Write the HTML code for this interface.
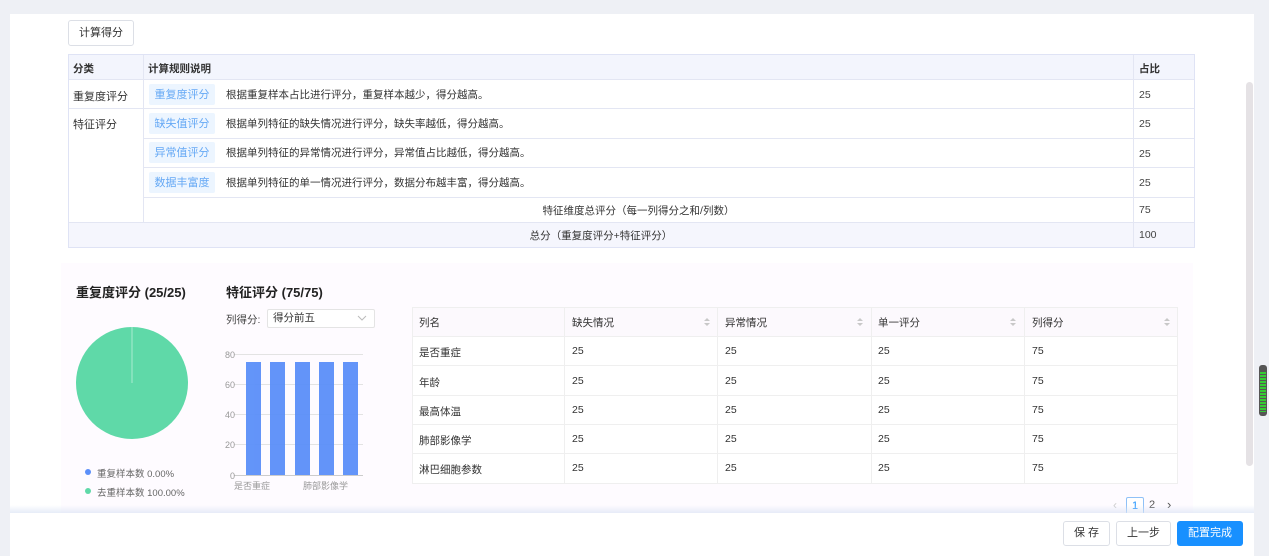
<!DOCTYPE html>
<html><head><meta charset="utf-8"><style>
*{box-sizing:border-box;margin:0;padding:0}
body{width:1269px;height:556px;background:#eef0f5;font-family:"Liberation Sans","Noto Sans CJK SC",sans-serif;font-size:11px;color:#333;position:relative;overflow:hidden}
.a{position:absolute}
.panel{left:10px;top:14px;width:1244px;height:542px;background:#fff}
.btn{border:1px solid #dcdfe6;border-radius:3px;background:#fff;text-align:center;color:#333;font-size:11px}
.tag{position:absolute;left:149px;width:66px;height:21px;background:#ecf5ff;color:#66a9f5;font-size:11px;line-height:23px;text-align:center;border-radius:2px}
.desc{position:absolute;left:226px;font-size:10.5px;color:#333}
.num{position:absolute;left:1139px;font-size:10.5px;color:#444}
.hl{position:absolute;height:1px;background:#e3e6f3}
.rt{position:absolute;font-size:10.5px;color:#333}
.rhl{position:absolute;left:412px;width:766px;height:1px;background:#efefef}
.rvl{position:absolute;top:307px;height:177px;width:1px;background:#efefef}
.sort{position:absolute;width:6px;height:10px}
</style></head><body>
<div class="a panel"></div>
<div class="a btn" style="left:68px;top:20px;width:66px;height:26px;line-height:24px">计算得分</div>

<div class="a" style="left:68px;top:54px;width:1127px;height:194px;border:1px solid #dfe3f5"></div>
<div class="a" style="left:69px;top:55px;width:1125px;height:24px;background:#f3f5fd"></div>
<div class="a" style="left:69px;top:222px;width:1125px;height:25px;background:#f5f6fd"></div>
<div class="hl" style="left:69px;top:79px;width:1125px"></div>
<div class="hl" style="left:69px;top:108px;width:1125px"></div>
<div class="hl" style="left:144px;top:138px;width:1050px"></div>
<div class="hl" style="left:144px;top:167px;width:1050px"></div>
<div class="hl" style="left:144px;top:197px;width:1050px"></div>
<div class="hl" style="left:69px;top:222px;width:1125px"></div>
<div class="a" style="left:143px;top:55px;width:1px;height:167px;background:#e3e6f3"></div>
<div class="a" style="left:1133px;top:55px;width:1px;height:192px;background:#e3e6f3"></div>
<div class="a" style="left:73px;top:61px;font-weight:bold;font-size:10.5px">分类</div>
<div class="a" style="left:148px;top:61px;font-weight:bold;font-size:10.5px">计算规则说明</div>
<div class="a" style="left:1139px;top:61px;font-weight:bold;font-size:10.5px">占比</div>
<div class="a" style="left:73px;top:88px;font-size:11px">重复度评分</div>
<div class="a" style="left:73px;top:116px;font-size:11px">特征评分</div>
<div class="tag" style="top:84px">重复度评分</div>
<div class="tag" style="top:113px">缺失值评分</div>
<div class="tag" style="top:142px">异常值评分</div>
<div class="tag" style="top:172px">数据丰富度</div>
<div class="desc" style="top:87px">根据重复样本占比进行评分，重复样本越少，得分越高。</div>
<div class="desc" style="top:116px">根据单列特征的缺失情况进行评分，缺失率越低，得分越高。</div>
<div class="desc" style="top:145px">根据单列特征的异常情况进行评分，异常值占比越低，得分越高。</div>
<div class="desc" style="top:175px">根据单列特征的单一情况进行评分，数据分布越丰富，得分越高。</div>
<div class="num" style="top:89px">25</div>
<div class="num" style="top:118px">25</div>
<div class="num" style="top:148px">25</div>
<div class="num" style="top:177px">25</div>
<div class="num" style="top:204px">75</div>
<div class="num" style="top:229px">100</div>
<div class="a" style="left:144px;width:989px;top:203px;text-align:center;font-size:10.5px">特征维度总评分（每一列得分之和/列数）</div>
<div class="a" style="left:69px;width:1064px;top:228px;text-align:center;font-size:10.5px">总分（重复度评分+特征评分）</div>

<div class="a" style="left:61px;top:263px;width:1132px;height:250px;background:#fefbff"></div>
<div class="a" style="left:76px;top:282px;font-size:13px;font-weight:bold;color:#222">重复度评分 (25/25)</div>
<div class="a" style="left:226px;top:282px;font-size:13px;font-weight:bold;color:#222">特征评分 (75/75)</div>
<svg class="a" style="left:70px;top:320px" width="124" height="128"><circle cx="62" cy="63" r="56" fill="#5fd9a8"/><line x1="62" y1="7" x2="62" y2="63" stroke="#a8ead0" stroke-width="1"/></svg>
<div class="a" style="left:85px;top:469px;width:6px;height:6px;border-radius:50%;background:#5b8ff9"></div>
<div class="a" style="left:97px;top:466px;font-size:9.5px;color:#666">重复样本数 0.00%</div>
<div class="a" style="left:85px;top:488px;width:6px;height:6px;border-radius:50%;background:#5fd9a8"></div>
<div class="a" style="left:97px;top:485px;font-size:9.5px;color:#666">去重样本数 100.00%</div>

<div class="a" style="left:226px;top:312px;font-size:10.5px;color:#444">列得分:</div>
<div class="a" style="left:267px;top:309px;width:108px;height:19px;border:1px solid #e4e4e4;background:#fff;border-radius:2px;font-size:10.5px;line-height:17px;padding-left:5px">得分前五</div>
<svg class="a" style="left:357px;top:314px" width="10" height="8"><path d="M1 2 L5 6 L9 2" fill="none" stroke="#bbb" stroke-width="1"/></svg>
<svg class="a" style="left:220px;top:345px" width="150" height="150" font-family="Liberation Sans" font-size="9" fill="#999">
<g stroke="#e3e3e3"><line x1="14" y1="9.5" x2="143" y2="9.5"/><line x1="14" y1="39.5" x2="143" y2="39.5"/><line x1="14" y1="69.5" x2="143" y2="69.5"/><line x1="14" y1="99.5" x2="143" y2="99.5"/></g>
<line x1="14" y1="130.5" x2="143" y2="130.5" stroke="#ccc"/>
<text x="15" y="13" text-anchor="end">80</text><text x="15" y="43" text-anchor="end">60</text><text x="15" y="73" text-anchor="end">40</text><text x="15" y="103" text-anchor="end">20</text><text x="15" y="134" text-anchor="end">0</text>
<g fill="#5b8ff9" opacity=".95"><rect x="26" y="17" width="15" height="113"/><rect x="50" y="17" width="15" height="113"/><rect x="75" y="17" width="15" height="113"/><rect x="99" y="17" width="15" height="113"/><rect x="123" y="17" width="15" height="113"/></g>
<text x="14" y="144">是否重症</text><text x="83" y="144">肺部影像学</text>
</svg>

<div class="a" style="left:412px;top:307px;width:766px;height:177px;border:1px solid #efefef;background:#fff"></div>
<div class="a" style="left:413px;top:308px;width:764px;height:28px;background:#fcf9fd"></div>
<div class="rhl" style="top:336px"></div><div class="rhl" style="top:365px"></div><div class="rhl" style="top:395px"></div><div class="rhl" style="top:424px"></div><div class="rhl" style="top:453px"></div>
<div class="rvl" style="left:564px"></div><div class="rvl" style="left:717px"></div><div class="rvl" style="left:871px"></div><div class="rvl" style="left:1024px"></div>
<div class="rt" style="left:419px;top:315px">列名</div>
<div class="rt" style="left:572px;top:315px">缺失情况</div>
<div class="rt" style="left:725px;top:315px">异常情况</div>
<div class="rt" style="left:878px;top:315px">单一评分</div>
<div class="rt" style="left:1032px;top:315px">列得分</div>
<svg class="sort" style="left:704px;top:317px"><path d="M0 4L3 1L6 4Z M0 6L3 9L6 6Z" fill="#c8c8c8"/></svg>
<svg class="sort" style="left:857px;top:317px"><path d="M0 4L3 1L6 4Z M0 6L3 9L6 6Z" fill="#c8c8c8"/></svg>
<svg class="sort" style="left:1010px;top:317px"><path d="M0 4L3 1L6 4Z M0 6L3 9L6 6Z" fill="#c8c8c8"/></svg>
<svg class="sort" style="left:1164px;top:317px"><path d="M0 4L3 1L6 4Z M0 6L3 9L6 6Z" fill="#c8c8c8"/></svg>
<div class="rt" style="left:419px;top:345px">是否重症</div><div class="rt" style="left:572px;top:345px">25</div><div class="rt" style="left:725px;top:345px">25</div><div class="rt" style="left:878px;top:345px">25</div><div class="rt" style="left:1032px;top:345px">75</div>
<div class="rt" style="left:419px;top:375px">年龄</div><div class="rt" style="left:572px;top:375px">25</div><div class="rt" style="left:725px;top:375px">25</div><div class="rt" style="left:878px;top:375px">25</div><div class="rt" style="left:1032px;top:375px">75</div>
<div class="rt" style="left:419px;top:404px">最高体温</div><div class="rt" style="left:572px;top:404px">25</div><div class="rt" style="left:725px;top:404px">25</div><div class="rt" style="left:878px;top:404px">25</div><div class="rt" style="left:1032px;top:404px">75</div>
<div class="rt" style="left:419px;top:433px">肺部影像学</div><div class="rt" style="left:572px;top:433px">25</div><div class="rt" style="left:725px;top:433px">25</div><div class="rt" style="left:878px;top:433px">25</div><div class="rt" style="left:1032px;top:433px">75</div>
<div class="rt" style="left:419px;top:462px">淋巴细胞参数</div><div class="rt" style="left:572px;top:462px">25</div><div class="rt" style="left:725px;top:462px">25</div><div class="rt" style="left:878px;top:462px">25</div><div class="rt" style="left:1032px;top:462px">75</div>

<div class="a" style="left:1113px;top:498px;font-size:12px;color:#ccc">&lsaquo;</div>
<div class="a" style="left:1126px;top:497px;width:18px;height:18px;border:1px solid #8fc1f7;border-radius:2px;color:#1890ff;text-align:center;line-height:16px;font-size:11px;background:#fff">1</div>
<div class="a" style="left:1149px;top:499px;font-size:11px;color:#555">2</div>
<div class="a" style="left:1167px;top:497px;font-size:13px;color:#555">&rsaquo;</div>

<div class="a" style="left:10px;top:505px;width:1244px;height:8px;background:linear-gradient(rgba(220,228,245,0),rgba(220,228,245,.7))"></div>
<div class="a" style="left:10px;top:513px;width:1244px;height:43px;background:#fff"></div>
<div class="a btn" style="left:1063px;top:521px;width:47px;height:25px;line-height:23px">保 存</div>
<div class="a btn" style="left:1116px;top:521px;width:55px;height:25px;line-height:23px">上一步</div>
<div class="a" style="left:1177px;top:521px;width:66px;height:25px;line-height:25px;background:#1890ff;color:#fff;text-align:center;border-radius:3px;font-size:11px">配置完成</div>

<div class="a" style="left:1246px;top:82px;width:7px;height:384px;background:#e5e2e5;border-radius:4px"></div>
<div class="a" style="left:1259px;top:365px;width:8px;height:51px;background:#555;border-radius:3px"></div>
<div class="a" style="left:1260px;top:372px;width:6px;height:40px;background:repeating-linear-gradient(#3c3 0 2px,#555 2px 3px)"></div>
</body></html>
